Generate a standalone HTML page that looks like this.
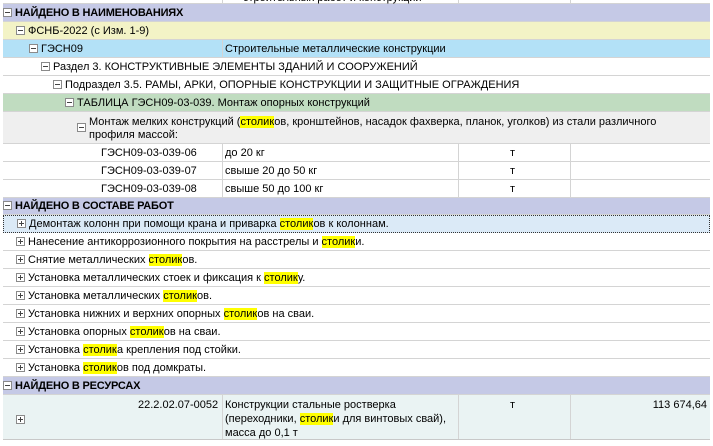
<!DOCTYPE html>
<html><head><meta charset="utf-8"><style>
*{margin:0;padding:0;box-sizing:border-box}
body{width:713px;height:446px;background:#fff;font-family:"Liberation Sans",sans-serif;font-size:11px;color:#000;position:relative;overflow:hidden}
.r{position:absolute;left:3px;width:707px;border-bottom:1px solid #d4d4d4;white-space:nowrap;line-height:18px}
.sec{background:#c5c9e6;font-weight:bold;letter-spacing:-0.2px}
.b{display:inline-block;width:9px;height:9px;border:1px solid #8a8a8a;background:#fff;position:relative;vertical-align:-1px;margin-right:3px}
.b:before{content:"";position:absolute;left:1px;top:3px;width:5px;height:1px;background:#444}
.p:after{content:"";position:absolute;left:3px;top:1px;width:1px;height:5px;background:#444}
.h{background:#ffff00}
.c{position:absolute;top:0;bottom:0;border-left:1px solid #d4d4d4}
.t{position:absolute;top:0}
</style></head><body>
<div class="r" style="top:-14px;height:18px;background:#fff"><div class="c" style="left:219px"></div><div class="c" style="left:455px"></div><div class="c" style="left:567px"></div><span class="t" style="left:240px;top:3px">строительных работ и конструкций</span></div>
<div class="r sec" style="top:4px;height:18px"><span class="b"></span>НАЙДЕНО В НАИМЕНОВАНИЯХ</div>
<div class="r" style="top:22px;height:18px;background:#f3f3c6;padding-left:13px"><span class="b"></span>ФСНБ-2022 (с Изм. 1-9)</div>
<div class="r" style="top:40px;height:18px;background:#b3e1f7;padding-left:26px"><span class="b"></span>ГЭСН09<div class="c" style="left:219px"></div><span class="t" style="left:222px">Строительные металлические конструкции</span></div>
<div class="r" style="top:58px;height:18px;padding-left:38px"><span class="b"></span>Раздел 3. КОНСТРУКТИВНЫЕ ЭЛЕМЕНТЫ ЗДАНИЙ И СООРУЖЕНИЙ</div>
<div class="r" style="top:76px;height:18px;padding-left:50px"><span class="b"></span>Подраздел 3.5. РАМЫ, АРКИ, ОПОРНЫЕ КОНСТРУКЦИИ И ЗАЩИТНЫЕ ОГРАЖДЕНИЯ</div>
<div class="r" style="top:94px;height:18px;background:#c0dcc0;padding-left:62px"><span class="b"></span>ТАБЛИЦА ГЭСН09-03-039. Монтаж опорных конструкций</div>
<div class="r" style="top:112px;height:32px;background:#efefef;line-height:13px;padding-top:3px"><span class="b" style="position:absolute;left:74px;top:11px"></span><span style="position:absolute;left:86px;top:4px">Монтаж мелких конструкций (<span class="h">столик</span>ов, кронштейнов, насадок фахверка, планок, уголков) из стали различного<br>профиля массой:</span></div>
<div class="r" style="top:144px;height:18px"><div class="c" style="left:219px"></div><div class="c" style="left:455px"></div><div class="c" style="left:567px"></div><span class="t" style="left:98px">ГЭСН09-03-039-06</span><span class="t" style="left:222px">до 20 кг</span><span class="t" style="left:507px">т</span></div>
<div class="r" style="top:162px;height:18px"><div class="c" style="left:219px"></div><div class="c" style="left:455px"></div><div class="c" style="left:567px"></div><span class="t" style="left:98px">ГЭСН09-03-039-07</span><span class="t" style="left:222px">свыше 20 до 50 кг</span><span class="t" style="left:507px">т</span></div>
<div class="r" style="top:180px;height:18px"><div class="c" style="left:219px"></div><div class="c" style="left:455px"></div><div class="c" style="left:567px"></div><span class="t" style="left:98px">ГЭСН09-03-039-08</span><span class="t" style="left:222px">свыше 50 до 100 кг</span><span class="t" style="left:507px">т</span></div>
<div class="r sec" style="top:198px;height:17px;line-height:17px"><span class="b"></span>НАЙДЕНО В СОСТАВЕ РАБОТ</div>
<div class="r" style="top:215px;height:18px;line-height:16px;background:#dbeaf7;border:1px dotted #333;padding-left:13px"><span class="b p"></span>Демонтаж колонн при помощи крана и приварка <span class="h">столик</span>ов к колоннам.</div>
<div class="r" style="top:233px;height:18px;padding-left:13px"><span class="b p"></span>Нанесение антикоррозионного покрытия на расстрелы и <span class="h">столик</span>и.</div>
<div class="r" style="top:251px;height:18px;padding-left:13px"><span class="b p"></span>Снятие металлических <span class="h">столик</span>ов.</div>
<div class="r" style="top:269px;height:18px;padding-left:13px"><span class="b p"></span>Установка металлических стоек и фиксация к <span class="h">столик</span>у.</div>
<div class="r" style="top:287px;height:18px;padding-left:13px"><span class="b p"></span>Установка металлических <span class="h">столик</span>ов.</div>
<div class="r" style="top:305px;height:18px;padding-left:13px"><span class="b p"></span>Установка нижних и верхних опорных <span class="h">столик</span>ов на сваи.</div>
<div class="r" style="top:323px;height:18px;padding-left:13px"><span class="b p"></span>Установка опорных <span class="h">столик</span>ов на сваи.</div>
<div class="r" style="top:341px;height:18px;padding-left:13px"><span class="b p"></span>Установка <span class="h">столик</span>а крепления под стойки.</div>
<div class="r" style="top:359px;height:18px;padding-left:13px"><span class="b p"></span>Установка <span class="h">столик</span>ов под домкраты.</div>
<div class="r sec" style="top:377px;height:18px"><span class="b"></span>НАЙДЕНО В РЕСУРСАХ</div>
<div class="r" style="top:395px;height:45px;background:#eaf3f3;line-height:14px;border-bottom:1px solid #c8c8c8"><div class="c" style="left:219px"></div><div class="c" style="left:455px"></div><div class="c" style="left:567px"></div><span class="b p" style="position:absolute;left:13px;top:20px"></span><span class="t" style="left:135px;top:3px">22.2.02.07-0052</span><span class="t" style="left:222px;top:3px">Конструкции стальные ростверка<br>(переходники, <span class="h">столик</span>и для винтовых свай),<br>масса до 0,1 т</span><span class="t" style="left:507px;top:3px">т</span><span class="t" style="right:3px;top:3px">113 674,64</span></div>
</body></html>
